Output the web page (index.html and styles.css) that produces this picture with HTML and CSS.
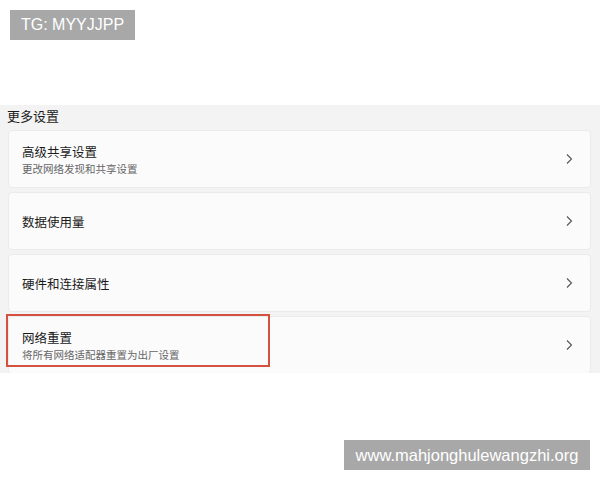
FILE: index.html
```html
<!DOCTYPE html>
<html lang="zh-CN">
<head>
<meta charset="utf-8">
<link rel="stylesheet" href="styles.css">
</head>
<body>
<div class="badge tg">TG: MYYJJPP</div>
<div class="shot">
  <div class="section-title">更多设置</div>
  <div class="list">
    <div class="card">
      <div class="text">
        <div class="title">高级共享设置</div>
        <div class="sub">更改网络发现和共享设置</div>
      </div>
      <svg class="chev" width="8" height="12" viewBox="0 0 8 12"><path d="M2 1.5 L6.5 6 L2 10.5" fill="none" stroke="#555" stroke-width="1.1"/></svg>
    </div>
    <div class="card">
      <div class="text">
        <div class="title">数据使用量</div>
      </div>
      <svg class="chev" width="8" height="12" viewBox="0 0 8 12"><path d="M2 1.5 L6.5 6 L2 10.5" fill="none" stroke="#555" stroke-width="1.1"/></svg>
    </div>
    <div class="card">
      <div class="text">
        <div class="title">硬件和连接属性</div>
      </div>
      <svg class="chev" width="8" height="12" viewBox="0 0 8 12"><path d="M2 1.5 L6.5 6 L2 10.5" fill="none" stroke="#555" stroke-width="1.1"/></svg>
    </div>
    <div class="card">
      <div class="text">
        <div class="title">网络重置</div>
        <div class="sub">将所有网络适配器重置为出厂设置</div>
      </div>
      <svg class="chev" width="8" height="12" viewBox="0 0 8 12"><path d="M2 1.5 L6.5 6 L2 10.5" fill="none" stroke="#555" stroke-width="1.1"/></svg>
    </div>
  </div>
  <div class="highlight"></div>
</div>
<div class="badge site">www.mahjonghulewangzhi.org</div>
</body>
</html>
```
FILE: styles.css
```css
html, body {
  margin: 0;
  padding: 0;
  background: #ffffff;
  width: 600px;
  height: 480px;
  overflow: hidden;
  font-family: "Noto Sans CJK SC", "Noto Sans", sans-serif;
}
.badge {
  position: absolute;
  background: #a8a8a8;
  color: #ffffff;
  font-family: "Liberation Sans", Arial, sans-serif;
  font-size: 16px;
  display: flex;
  align-items: center;
  justify-content: center;
  box-sizing: border-box;
}
.tg {
  left: 10px;
  top: 10px;
  width: 125px;
  height: 30px;
}
.site {
  left: 344px;
  top: 440px;
  width: 246px;
  height: 30px;
  font-size: 16.5px;
}
.shot {
  position: relative;
  margin-top: 105px;
  height: 268px;
  overflow: hidden;
  background: #f3f3f3;
  padding: 0 9px 0 8px;
  box-sizing: border-box;
}
.section-title {
  height: 25px;
  line-height: 21px;
  font-size: 13px;
  color: #1b1b1b;
  margin-left: -1px;
}
.list {
  display: flex;
  flex-direction: column;
  gap: 4px;
}
.card {
  height: 58px;
  box-sizing: border-box;
  background: #fbfbfc;
  border: 1px solid #ebebeb;
  border-radius: 4px;
  display: flex;
  align-items: center;
  justify-content: space-between;
  padding: 0 17px 0 13px;
}
.text {
  display: flex;
  flex-direction: column;
  margin-top: 1px;
}
.title {
  font-size: 12.5px;
  line-height: 18px;
  color: #1a1a1a;
}
.sub {
  font-size: 10.5px;
  line-height: 15px;
  color: #666666;
}
.chev {
  display: block;
}
.highlight {
  position: absolute;
  left: 6px;
  top: 209px;
  width: 264px;
  height: 53px;
  box-sizing: border-box;
  border: 2px solid #d4503f;
}
```
